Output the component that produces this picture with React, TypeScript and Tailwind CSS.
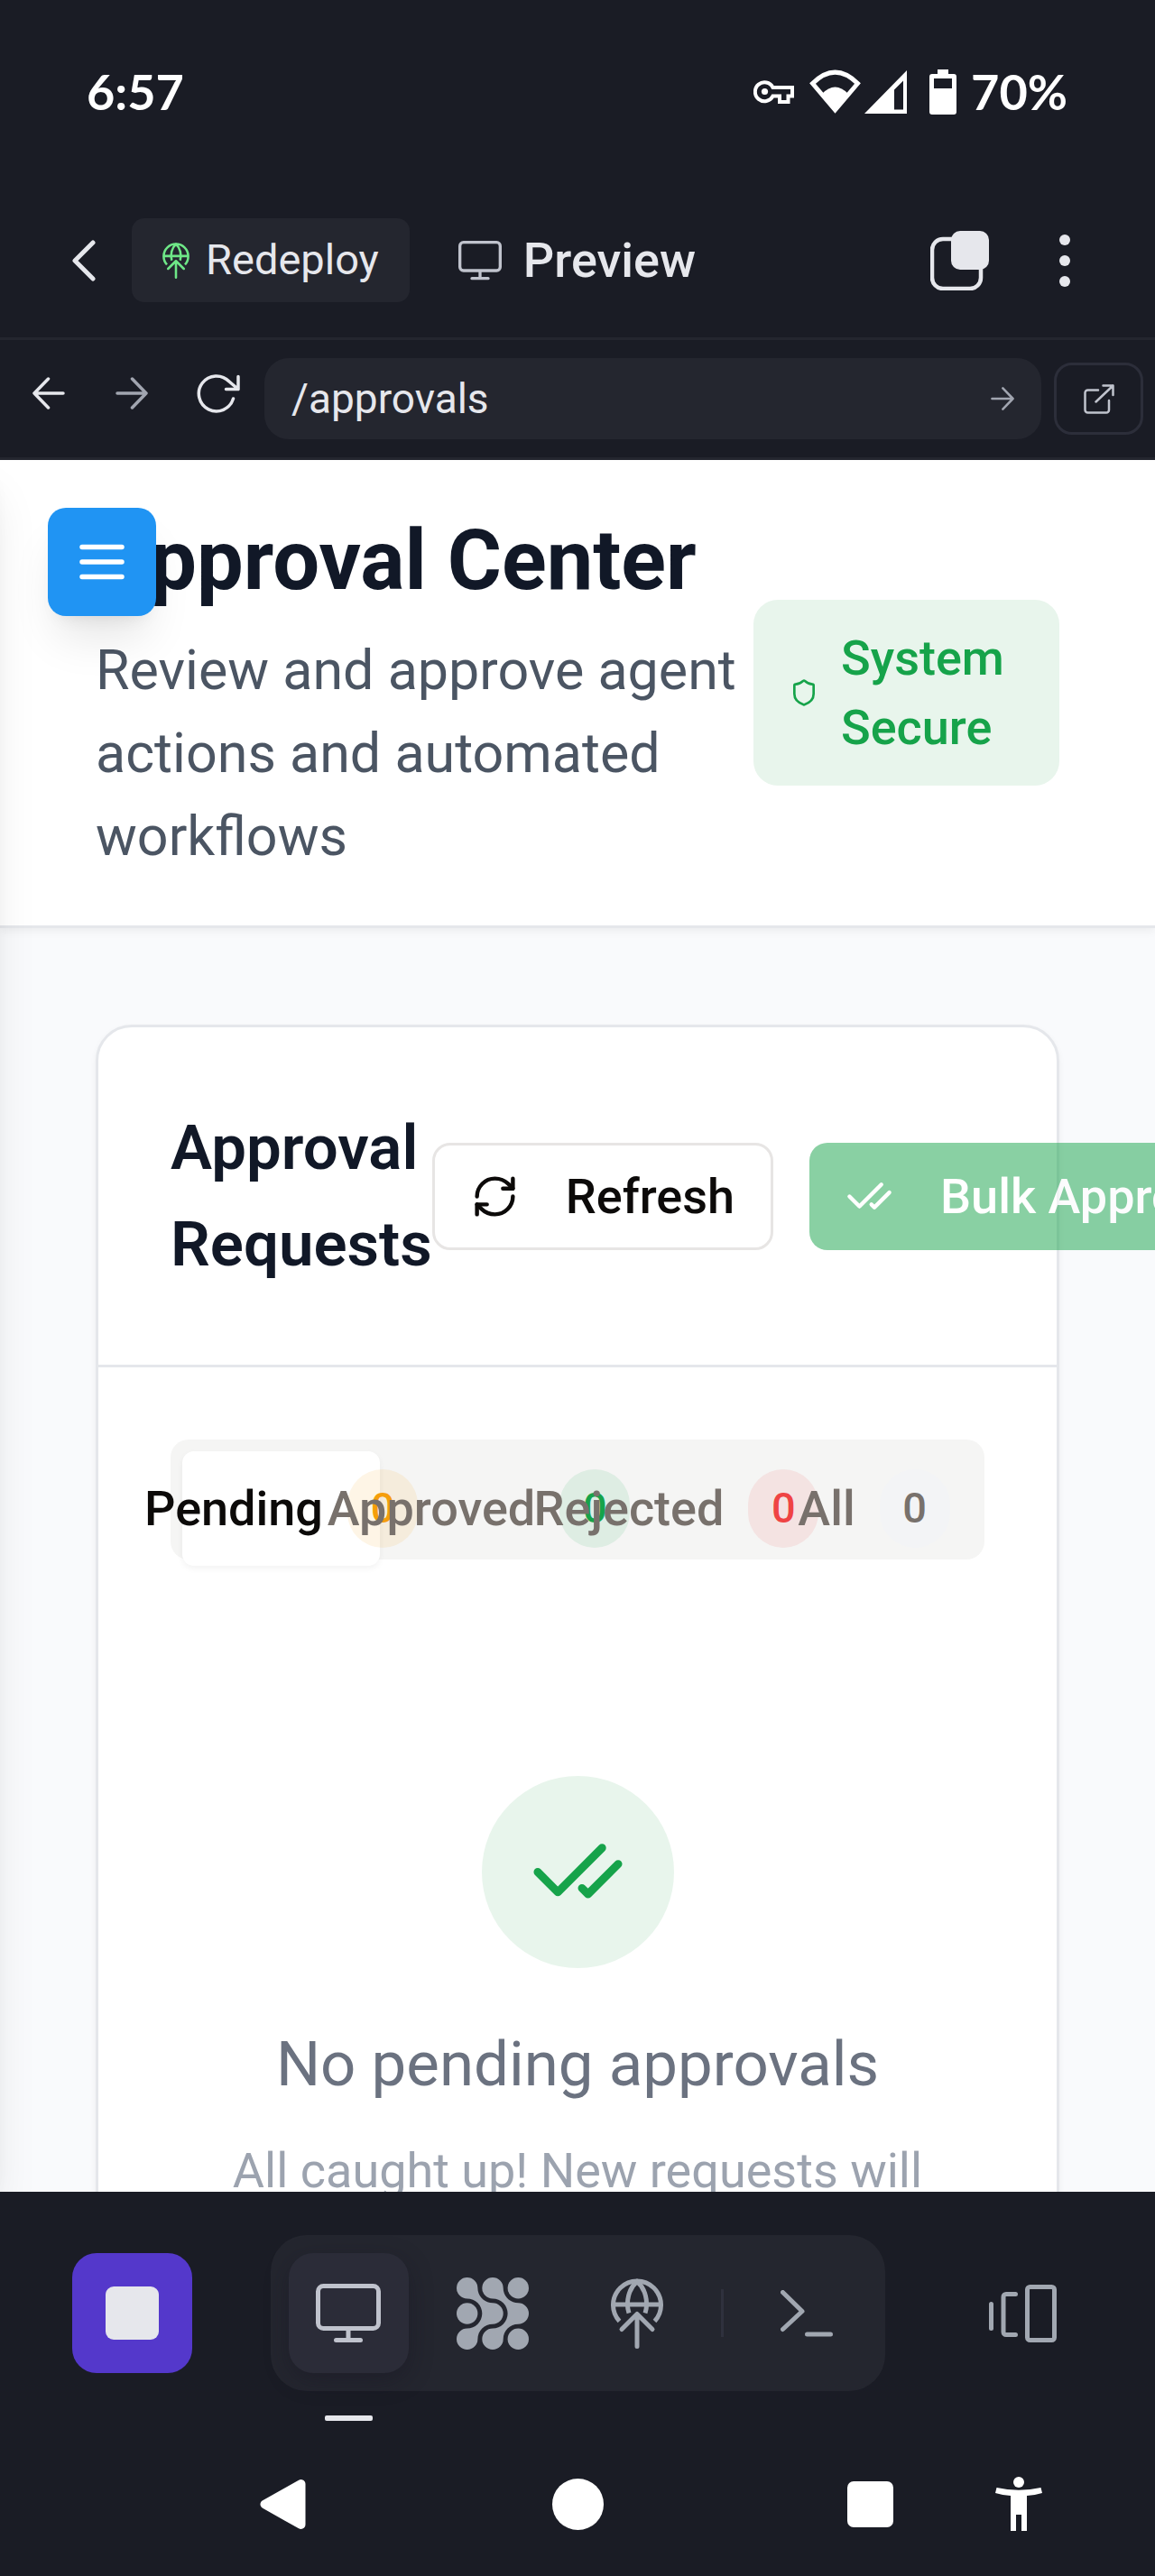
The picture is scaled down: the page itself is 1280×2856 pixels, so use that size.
import React from 'react';
import { CheckCheck, RefreshCw, Shield } from 'lucide-react';

function KeyIcon() {
  return (
    <svg className="h-[26px] w-[45px]" viewBox="0 0 45 26" fill="none" stroke="white" strokeWidth="4" aria-hidden="true">
      <path d="M21.5 8H43V17.5H38.5V24H29V17.5H21.5A10.4 10.4 0 1 1 21.5 8Z" />
      <circle cx="12.5" cy="12.5" r="3.6" fill="white" stroke="none" />
    </svg>
  );
}

function WifiIcon() {
  return (
    <svg className="h-[49px] w-[57px]" viewBox="0 0 57 49" aria-hidden="true">
      <path d="M3.5 15.5Q28.5 -9.5 53.5 15.5L28.5 45Z" fill="none" stroke="white" strokeWidth="5" />
      <path d="M14 27Q28.5 12 43 27L28.5 47Z" fill="white" />
    </svg>
  );
}

function CellIcon() {
  return (
    <svg className="h-12 w-12" viewBox="0 0 48 48" aria-hidden="true">
      <path d="M47 0V48H0ZM43 11.5L33 21.5V43.5H43Z" fill="white" fillRule="evenodd" />
    </svg>
  );
}

function BatteryIcon() {
  return (
    <svg className="h-[50px] w-[30px]" viewBox="0 0 30 50" aria-hidden="true">
      <path
        d="M9 0H21V5H27A3 3 0 0 1 30 8V47A3 3 0 0 1 27 50H3A3 3 0 0 1 0 47V8A3 3 0 0 1 3 5H9ZM5 10V21H25V10Z"
        fill="white"
        fillRule="evenodd"
      />
    </svg>
  );
}

function GlobeUpIcon({ className }: { className: string }) {
  return (
    <svg className={className} viewBox="0 0 58 78" fill="none" stroke="currentColor" strokeWidth="5" aria-hidden="true">
      <path d="M9.5 47.5A26.5 26.5 0 1 1 48.5 47.5M2.5 29H55.5" />
      <path d="M20 38.5C16 26 20 11 29 3.5C38 11 42 26 38 38.5" />
      <path d="M12 56.5L29 39.5L46 56.5M29 40V75.5" strokeLinecap="round" strokeLinejoin="round" />
    </svg>
  );
}

function MonitorIcon({ className }: { className: string }) {
  return (
    <svg className={className} viewBox="0 0 72 66" fill="none" stroke="currentColor" strokeWidth="5" aria-hidden="true">
      <rect x="2.5" y="2.5" width="67" height="47" rx="6" />
      <path d="M36 49.5V62" />
      <path d="M22.5 62.5H49.5" strokeLinecap="round" />
    </svg>
  );
}

function ArrowIcon({ className }: { className: string }) {
  return (
    <svg
      className={className}
      viewBox="0 0 36 36"
      fill="none"
      stroke="currentColor"
      strokeWidth="3.5"
      strokeLinecap="round"
      strokeLinejoin="round"
      aria-hidden="true"
    >
      <path d="M2 18H34M18.5 2L34 18L18.5 34" />
    </svg>
  );
}

function StatusBar() {
  return (
    <div className="flex h-[203px] shrink-0 items-center justify-between pl-24 pr-[97px] font-[Lato,sans-serif] text-[54px] font-bold text-white">
      <span>6:57</span>
      <div className="flex items-center">
        <KeyIcon />
        <div className="ml-[17px] flex items-center gap-1">
          <WifiIcon />
          <CellIcon />
        </div>
        <div className="ml-6 flex items-center gap-4">
          <BatteryIcon />
          <span>70%</span>
        </div>
      </div>
    </div>
  );
}

function AppHeader() {
  return (
    <header className="flex h-[174px] shrink-0 items-center border-b-[3px] border-[#24262f] pl-20 pr-[94px] text-[#e6e7ec]">
      <button type="button" aria-label="Back">
        <svg className="h-[46px] w-[26px]" viewBox="0 0 26 46" fill="none" stroke="currentColor" strokeWidth="5" strokeLinecap="round" strokeLinejoin="round" aria-hidden="true">
          <path d="M23 3L3 23L23 43" />
        </svg>
      </button>
      <button type="button" className="ml-10 flex h-[93px] items-center gap-[18px] rounded-[14px] bg-[#24262f] px-[34px] text-[47px]">
        <GlobeUpIcon className="h-10 w-[30px] text-[#6ee787]" />
        Redeploy
      </button>
      <div className="ml-[54px] flex items-center gap-6">
        <MonitorIcon className="h-[44px] w-12 text-[#c0c3cd]" />
        <h2 className="text-[54px] font-medium">Preview</h2>
      </div>
      <div className="ml-auto flex items-center gap-[78px]">
        <button type="button" aria-label="Tabs">
          <svg className="h-[66px] w-[65px]" viewBox="0 0 65 66" aria-hidden="true">
            <rect x="2" y="9" width="54" height="55" rx="12" fill="none" stroke="currentColor" strokeWidth="4.5" />
            <rect x="23" y="0" width="42" height="43" rx="10" fill="currentColor" />
          </svg>
        </button>
        <button type="button" aria-label="More options">
          <svg className="h-[60px] w-3" viewBox="0 0 12 60" fill="currentColor" aria-hidden="true">
            <circle cx="6" cy="7" r="6" />
            <circle cx="6" cy="30" r="6" />
            <circle cx="6" cy="53" r="6" />
          </svg>
        </button>
      </div>
    </header>
  );
}

function AddressBar() {
  return (
    <div className="flex h-[133px] shrink-0 items-center border-b-[3px] border-[#24262f] pl-9 pr-[13px] text-[#e6e7ec]">
      <div className="flex items-center gap-14 pb-3">
        <button type="button" aria-label="Go back">
          <ArrowIcon className="h-9 w-9 rotate-180" />
        </button>
        <button type="button" aria-label="Go forward" className="text-[#a1a5b0]">
          <ArrowIcon className="h-9 w-9" />
        </button>
        <button type="button" aria-label="Reload" className="-ml-0.5">
          <svg className="h-11 w-12" viewBox="0 0 48 44" fill="none" stroke="currentColor" strokeWidth="3.5" strokeLinecap="round" strokeLinejoin="round" aria-hidden="true">
            <path d="M40.5 28A19.5 19.5 0 1 1 36 9L46 17.5M46 3.5V17.5H32.5" />
          </svg>
        </button>
      </div>
      <form className="ml-[27px] flex h-[90px] min-w-0 flex-1 items-center rounded-[27px] bg-[#24262f] px-[30px]" onSubmit={(e) => e.preventDefault()}>
        <input
          type="text"
          aria-label="Page address"
          defaultValue="/approvals"
          className="min-w-0 flex-1 bg-transparent text-[46px] outline-none"
        />
        <button type="submit" aria-label="Go" className="text-[#a1a5b0]">
          <ArrowIcon className="h-[26px] w-[26px]" />
        </button>
      </form>
      <button type="button" aria-label="Open in new tab" className="ml-[14px] flex h-20 w-[99px] items-center justify-center rounded-[20px] border-[3px] border-[#2c2e3a] text-[#c0c3cd]">
        <svg className="h-[33px] w-[34px]" viewBox="0 0 34 33" fill="none" stroke="currentColor" strokeWidth="2.5" strokeLinecap="round" strokeLinejoin="round" aria-hidden="true">
          <path d="M16 6.5H4.5A3 3 0 0 0 1.5 9.5V28.5A3 3 0 0 0 4.5 31.5H25A3 3 0 0 0 28 28.5V18M21.5 1.5H32.5V12M32.5 1.5L13.5 19.5" />
        </svg>
      </button>
    </div>
  );
}

const tabs = [
  { label: 'Pending', tab: 'bg-white text-stone-950 shadow-[0_3px_7px_rgba(0,0,0,0.05)]', badge: 'bg-[#f59e0b]/10 text-[#f59e0b]' },
  { label: 'Approved', tab: 'text-[#78716c]', badge: 'bg-[#16a34a]/10 text-[#16a34a]' },
  { label: 'Rejected', tab: 'text-[#78716c]', badge: 'bg-[#ef4444]/10 text-[#ef4444]' },
  { label: 'All', tab: 'text-[#78716c]', badge: 'bg-[#f3f4f6] text-[#78716c]' },
];

function RequestsCard() {
  return (
    <section className="rounded-[40px] border-[3px] border-[#e5e7eb] bg-white shadow-[0_3px_7px_rgba(0,0,0,0.05)]">
      <div className="flex items-center justify-between border-b-[3px] border-[#e5e7eb] p-20">
        <h2 className="text-[69px] font-semibold leading-[107px] text-[#111827]">Approval Requests</h2>
        <div className="flex shrink-0 gap-10 text-[54px] font-medium">
          <button type="button" className="flex h-[119px] items-center gap-[52px] rounded-[20px] border-[3px] border-[#e7e5e4] bg-white px-10 text-stone-950">
            <RefreshCw size={53} aria-hidden="true" />
            Refresh
          </button>
          <button type="button" disabled className="flex h-[119px] items-center gap-[52px] whitespace-nowrap rounded-[20px] bg-[#16a34a] px-10 text-white opacity-50">
            <CheckCheck size={53} aria-hidden="true" />
            Bulk Approve
          </button>
        </div>
      </div>
      <div className="p-20">
        <div role="tablist" className="grid h-[133px] grid-cols-4 items-start rounded-[20px] bg-[#f5f5f4] p-[13px]">
          {tabs.map((t, i) => (
            <button
              key={t.label}
              type="button"
              role="tab"
              aria-selected={i === 0}
              className={`flex h-[127px] min-w-0 items-center justify-center gap-[27px] rounded-[13px] text-[54px] font-medium ${t.tab}`}
            >
              {t.label}
              <span className={`flex h-[87px] w-[78px] shrink-0 items-center justify-center rounded-full text-[47px] ${t.badge}`}>0</span>
            </button>
          ))}
        </div>
        <div className="flex flex-col items-center px-[53px] pt-60 text-center">
          <div className="flex h-[213px] w-[213px] items-center justify-center rounded-full bg-[#e8f5ec]">
            <CheckCheck size={107} className="text-[#16a34a]" aria-hidden="true" />
          </div>
          <h3 className="mt-[53px] text-[69px] leading-[107px] text-[#6b7280]">No pending approvals</h3>
          <p className="mt-[26px] text-[54px] leading-[77px] text-[#9ca3af]">All caught up! New requests will appear here.</p>
        </div>
      </div>
    </section>
  );
}

function PreviewPage() {
  return (
    <main className="relative min-h-0 flex-1 overflow-hidden bg-[#f9fafc]">
      <header className="relative flex items-center border-b-[3px] border-[#e5e7eb] bg-white px-[106px] py-[53px] shadow-[0_3px_10px_rgba(0,0,0,0.06)]">
        <div className="min-w-0 flex-1">
          <h1 className="whitespace-nowrap text-[92px] font-bold leading-[118px] text-[#111827]">Approval Center</h1>
          <p className="mt-4 text-[61px] leading-[92px] text-[#4b5563]">Review and approve agent actions and automated workflows</p>
        </div>
        <div className="flex w-[339px] shrink-0 items-center gap-[25px] rounded-[27px] bg-[#e8f5ec] px-10 py-[26px] text-[#16a34a]">
          <Shield size={32} className="shrink-0" aria-hidden="true" />
          <span className="text-[54px] font-medium leading-[77px]">System Secure</span>
        </div>
      </header>
      <div className="px-[106px] py-[107px]">
        <RequestsCard />
      </div>
      <aside className="pointer-events-none absolute inset-y-0 right-full w-80 shadow-[0_33px_50px_-10px_rgba(0,0,0,0.1),0_13px_20px_-13px_rgba(0,0,0,0.1)]" aria-hidden="true" />
      <button
        type="button"
        aria-label="Open menu"
        className="absolute left-[53px] top-[53px] flex h-[120px] w-[120px] items-center justify-center rounded-[20px] bg-[#2094f3] text-white shadow-[0_33px_50px_-10px_rgba(0,0,0,0.1),0_13px_20px_-13px_rgba(0,0,0,0.1)]"
      >
        <svg className="h-10 w-[50px]" viewBox="0 0 50 40" fill="none" stroke="currentColor" strokeWidth="5.5" strokeLinecap="round" aria-hidden="true">
          <path d="M3 3.5H47M3 20H47M3 36.5H47" />
        </svg>
      </button>
    </main>
  );
}

function Toolbar() {
  return (
    <nav aria-label="Workspace tools" className="flex items-center justify-between px-20 pt-12 text-[#a1a7b1]">
      <button type="button" aria-label="Stop" className="flex h-[133px] w-[133px] items-center justify-center rounded-[27px] bg-[#5438cb]">
        <span className="h-[59px] w-[59px] rounded-[9px] bg-[#e6e7ec]" />
      </button>
      <div className="flex items-center rounded-[40px] bg-[#24262f] p-5">
        <button type="button" aria-label="Preview" className="relative flex h-[133px] w-[133px] items-center justify-center rounded-[27px] bg-[#2b2c38] text-[#c0c3cd] shadow-[0_8px_26px_rgba(20,18,32,0.35)]">
          <MonitorIcon className="h-[66px] w-[72px]" />
          <span className="absolute -bottom-[53px] left-10 h-[6px] w-[53px] rounded-[2px] bg-[#e6e7ec]" />
        </button>
        <button type="button" aria-label="Agent" className="ml-[27px] flex h-[133px] w-[133px] items-center justify-center">
          <svg className="h-20 w-20" viewBox="0 0 80 80" fill="currentColor" aria-hidden="true">
            <path d="M11.7 0A11.7 11.7 0 0 1 23.4 11.7C23.4 21 31 28.3 40 28.3A11.7 11.7 0 0 1 40 51.7C31 51.7 23.4 59 23.4 68.3A11.7 11.7 0 1 1 11.7 56.600A16.600 16.600 0 0 0 11.7 23.400A11.7 11.7 0 0 1 11.7 0Z" />
            <path
              transform="translate(28.3 0)"
              d="M11.7 0A11.7 11.7 0 0 1 23.4 11.7C23.4 21 31 28.3 40 28.3A11.7 11.7 0 0 1 40 51.7C31 51.7 23.4 59 23.4 68.3A11.7 11.7 0 1 1 11.7 56.600A16.600 16.600 0 0 0 11.7 23.400A11.7 11.7 0 0 1 11.7 0Z"
            />
            <circle cx="68.3" cy="11.7" r="11.7" />
            <circle cx="11.7" cy="40" r="11.7" />
            <circle cx="68.3" cy="68.3" r="11.7" />
          </svg>
        </button>
        <button type="button" aria-label="Publish" className="ml-[27px] flex h-[133px] w-[133px] items-center justify-center">
          <GlobeUpIcon className="h-[78px] w-[58px]" />
        </button>
        <span className="mx-[26px] h-[53px] w-[3px] bg-[#2f313d]" />
        <button type="button" aria-label="Shell" className="flex h-[133px] w-[133px] items-center justify-center">
          <svg className="h-[52px] w-[58px]" viewBox="0 0 58 52" fill="none" stroke="currentColor" strokeWidth="5" strokeLinecap="round" strokeLinejoin="round" aria-hidden="true">
            <path d="M2.5 2.5L24 23.5L2.5 43.5M29.5 49H55.5" />
          </svg>
        </button>
      </div>
      <button type="button" aria-label="Switch device" className="flex h-[133px] w-[133px] items-center justify-center">
        <svg className="h-16 w-[75px]" viewBox="0 0 75 64" fill="none" stroke="currentColor" strokeWidth="5" strokeLinecap="round" strokeLinejoin="round" aria-hidden="true">
          <path d="M2.5 21.5V48.5M29.5 10.5H19A3 3 0 0 0 16 13.5V52.5A3 3 0 0 0 19 55.5H29.5" />
          <rect x="42.5" y="2.5" width="30" height="59" rx="3" />
        </svg>
      </button>
    </nav>
  );
}

function SystemNav() {
  return (
    <nav aria-label="System navigation" className="grid grid-cols-[1fr_57px_1fr] items-center pb-[50px] pt-[95px] text-white">
      <button type="button" aria-label="System back" className="ml-72 justify-self-start">
        <svg className="h-[57px] w-[51px]" viewBox="0 0 51 57" fill="currentColor" stroke="currentColor" strokeWidth="10" strokeLinejoin="round" aria-hidden="true">
          <path d="M5.5 28.5L45.5 6V51Z" />
        </svg>
      </button>
      <button type="button" aria-label="Home" className="h-[57px] w-[57px] rounded-full bg-white" />
      <div className="flex items-center justify-end gap-[113px] pr-[125px]">
        <button type="button" aria-label="Recent apps" className="h-[51px] w-[51px] rounded-[7px] bg-white" />
        <button type="button" aria-label="Accessibility">
          <svg className="h-[60px] w-[52px]" viewBox="0 0 52 60" fill="currentColor" aria-hidden="true">
            <circle cx="26" cy="6" r="6" />
            <path d="M1.5 12Q26 17.5 50.5 12L52 18Q44 20.5 35 21V60H29V42H23V60H17V21Q8 20.5 0 18Z" />
          </svg>
        </button>
      </div>
    </nav>
  );
}

export default function App() {
  return (
    <div className="flex h-screen flex-col overflow-hidden bg-[#1a1c25] font-[Roboto,sans-serif]">
      <StatusBar />
      <AppHeader />
      <AddressBar />
      <PreviewPage />
      <footer className="shrink-0">
        <Toolbar />
        <SystemNav />
      </footer>
    </div>
  );
}
